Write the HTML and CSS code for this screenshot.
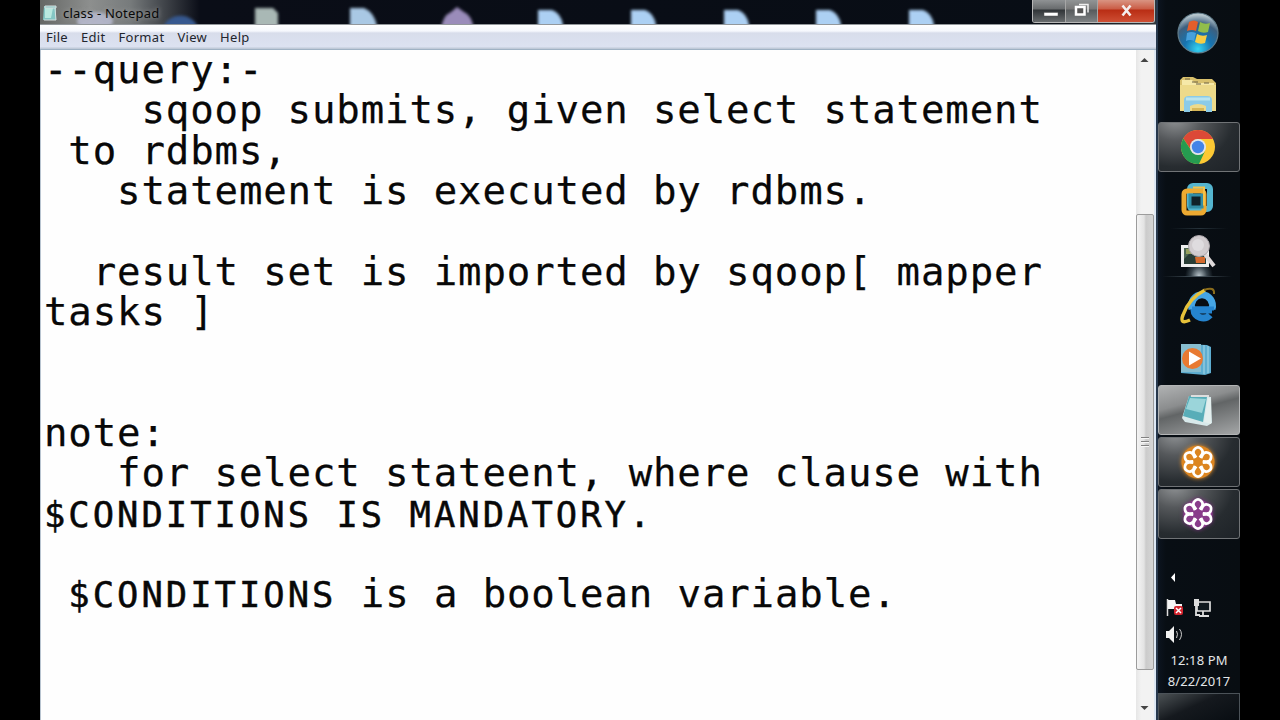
FILE: index.html
```html
<!DOCTYPE html>
<html lang="en">
<head>
<meta charset="utf-8">
<title>class - Notepad</title>
<link rel="stylesheet" href="styles.css">
</head>
<body>
<div class="screen">
  <main class="window">
    <header class="titlebar">
      <svg class="desktop-peek" width="1116" height="24" viewBox="40 0 1116 24">
        <g class="blurred">
          <ellipse cx="95" cy="21" rx="18" ry="9" fill="#c0c3dc" opacity=".75"/>
          <path d="M163 28a18 16 0 0 1 35 0z" fill="#36588f"/>
          <path d="M255 8h18l5 5v18h-23z" fill="#a9b8b5"/>
          <path d="M350 8h14q10 4 13 18v4h-27z" fill="#a9c8e4"/>
          <path d="M441 30q1-14 10-18l6-5 7 5q8 3 10 18z" fill="#9a8cba"/>
          <path id="doc" d="M538 10h14q9 3 11 15v6h-25z" fill="#acd0f3"/>
          <use href="#doc" x="93"/><use href="#doc" x="186"/><use href="#doc" x="278"/><use href="#doc" x="371"/>
        </g>
      </svg>
      <svg class="app-icon" width="16" height="18" viewBox="0 0 16 18"><path d="M2 2h12v14H1z" fill="#84c6c4"/><path d="M3 4h8L9 14H3z" fill="#b9e8df"/><path d="M3 2h11v2H3zM13 4l1 12H2" fill="none" stroke="#d5dede"/></svg>
      <span class="caption">class - Notepad</span>
      <div class="controls">
        <span class="ctl minimize"><svg width="32" height="23"><path d="M11 12.500h14v3.500H11z" fill="#fff" stroke="#555" stroke-width=".5"/></svg></span>
        <span class="ctl restore"><svg width="31" height="23"><path d="M13 4.500h9v8" fill="none" stroke="#eee" stroke-width="1.500"/><path d="M10 7h8.500v7.500H10z" fill="#555" stroke="#fff" stroke-width="2.500"/></svg></span>
        <span class="ctl close"><svg width="56" height="23"><path d="M24.500 5.500l8 10M32.500 5.500l-8 10" stroke="#f4eeee" stroke-width="2.600"/></svg></span>
      </div>
    </header>
    <nav class="menubar"><span>File</span><span>Edit</span><span>Format</span><span>View</span><span>Help</span></nav>
    <div class="editor">
<pre class="document">--query:-
    sqoop submits, given select statement
 to rdbms,
   statement is executed by rdbms.

  result set is imported by sqoop[ mapper
tasks ]


note:
   for select stateent, where clause with
<span class="caps">$CONDITIONS IS MANDATORY.</span>

<span class="caps"> $CONDITIONS</span> is a boolean variable.</pre>
      <div class="scrollbar">
        <svg class="arrow" width="17" height="20"><path d="M4.500 12l4-4 4 4z" fill="#444"/></svg>
        <div class="track"></div>
        <div class="thumb"><i></i><i></i><i></i></div>
        <svg class="arrow bottom" width="17" height="50"><path d="M4.500 36l4 4 4-4z" fill="#444"/></svg>
      </div>
    </div>
  </main>
  <aside class="taskbar">
    <div class="item start">
      <svg width="44" height="44" viewBox="0 0 44 44">
        <defs><radialGradient id="orb" cx=".5" cy=".9" r=".85"><stop offset="0" stop-color="#35d4f2"/><stop offset=".4" stop-color="#1674b1"/><stop offset=".75" stop-color="#3d5f7e"/><stop offset="1" stop-color="#b5c5cd"/></radialGradient></defs>
        <circle cx="22" cy="22" r="20" fill="url(#orb)" stroke="#617d8b" stroke-width="1.200"/>
        <path d="M13 11q5-3 9 0l-2 9q-4-2-9 0z" fill="#e45e2b"/><path d="M24 11q5 3 10 1l-2 9q-5 2-10-1z" fill="#91bd4b"/>
        <path d="M11 22q4-2 9 0l-2 8q-4-2-8 0z" fill="#48a0dc"/><path d="M21 23q5 3 10 1l-2 8q-5 2-10-1z" fill="#f7cd45"/>
      </svg>
    </div>
    <div class="item explorer">
      <svg width="40" height="40" viewBox="0 0 40 40">
        <path d="M2 6l3-3h10l4 2h15l4 4v26H2z" fill="#d9c16d"/><path d="M4 6h10l3 3h19v6H4z" fill="#f6e9a8"/><path d="M7 5h5m2 3h6m-2 2h5m3-1h5" stroke="#6d6345"/>
        <path d="M2 11h36v26H2z" fill="#edda8a"/><path d="M6 26q0-4 5-4h18q5 0 5 4v12h-6v-6q-8-4-16 0v6H6z" fill="#8bcbe8"/><path d="M8 25h24" stroke="#b9e4ef" stroke-width="3"/><path d="M14 34h12v3H14z" fill="#d7b757"/>
      </svg>
    </div>
    <div class="item button">
      <svg width="38" height="38" viewBox="0 0 38 38">
        <circle cx="19" cy="19" r="17" fill="#fcc934"/><path d="M4.300 10.500A17 17 0 0 1 34 11H19a8 8 0 0 0-7.500 10z" fill="#dc4937"/><path d="M4.300 10.500A17 17 0 0 0 20 36l6-13a8 8 0 0 1-14-1z" fill="#269b50"/>
        <circle cx="19" cy="19" r="8" fill="#dfe5ed"/><circle cx="19" cy="19" r="6.200" fill="#4384e8"/>
      </svg>
    </div>
    <div class="item vmware">
      <svg width="40" height="40" viewBox="0 0 40 40" fill="none">
        <rect x="12" y="5" width="20" height="23" rx="3" stroke="#54b5cf" stroke-width="6"/><rect x="6" y="10" width="20" height="22" rx="3" stroke="#edaa31" stroke-width="5"/><path d="M12 14h12v12H12z" fill="#10222a" stroke="#318da6" stroke-width="3"/><path d="M15 6.500h11v18" stroke="#f4c24a" stroke-width="2"/>
      </svg>
    </div>
    <div class="item magnifier">
      <svg width="44" height="40" viewBox="0 0 44 40">
        <path d="M5 13h28v22H5z" fill="#eee"/><path d="M8 16h22v16H8z" fill="#4c6550"/><path d="M8 27l7-7 6 5 9-2v9H8z" fill="#293d35"/><path d="M19 25h10v6H20z" fill="#d46b2e"/><path d="M10 17h6v5h-6z" fill="#96a05d"/>
        <path d="M28 21l10 13" stroke="#ded9da" stroke-width="4"/><circle cx="23" cy="14" r="10.500" fill="#d1cccf" stroke="#aca6ab"/><circle cx="22" cy="13" r="6" fill="#dfdcdf"/>
      </svg>
    </div>
    <div class="item ie">
      <svg width="44" height="44" viewBox="0 0 44 44" fill="none">
        <path d="M36 26H18a9 8 0 0 0 16 5" stroke="#2584cf" stroke-width="7"/><path d="M16 25a10.500 11 0 1 1 20 0" stroke="#45a5e5" stroke-width="7"/><path d="M16 24.500h22" stroke="#2584cf" stroke-width="4"/>
        <path d="M14 36q-11 5-7-5Q13 14 29 6" stroke="#e7c23a" stroke-width="3.500"/><path d="M28 6q11-4 10 4" stroke="#8b6d1c" stroke-width="2"/>
      </svg>
    </div>
    <div class="item wmp">
      <svg width="38" height="36" viewBox="0 0 38 36">
        <path d="M2 2l26 1 4 2v26l-6 2-24-2z" fill="#5dadd0"/><path d="M2 2h20v28H2z" fill="#87bdcf"/><path d="M25 3v29M29 4v27" stroke="#a9d8e6"/>
        <circle cx="13.500" cy="16.500" r="10.500" fill="#e87a32"/><path d="M10 9.500v14l12-7z" fill="#fff"/>
      </svg>
    </div>
    <div class="item button active">
      <svg width="38" height="40" viewBox="0 0 38 40">
        <path d="M10 6l22 1 1 26-5 3-22-4-3-4z" fill="#d8e9eb"/><path d="M10 6l18 1-4 25-20-6z" fill="#58adb8"/><path d="M11 8l16 1-4 14-16-4z" fill="#9bd5da"/><path d="M29 8l3 1v25l-7-2z" fill="#e4efee"/><path d="M12 6h18" stroke="#ddd" stroke-width="2"/>
      </svg>
    </div>
    <div class="item button">
      <svg class="flower orange" width="40" height="40" viewBox="-20 -20 40 40"><circle r="16.500" fill="#dc8520"/><g id="petals" fill="none" stroke="#fff" stroke-width="2.700"><path id="petal" d="M-1.800-4.500l-2-3a4.500 4.500 0 1 1 7.600 0l-2 3"/><use href="#petal" transform="rotate(60)"/><use href="#petal" transform="rotate(120)"/><use href="#petal" transform="rotate(180)"/><use href="#petal" transform="rotate(240)"/><use href="#petal" transform="rotate(300)"/></g></svg>
    </div>
    <div class="item button">
      <svg class="flower purple" width="40" height="40" viewBox="-20 -20 40 40"><circle r="14.500" fill="#893c8b"/><use href="#petals"/></svg>
    </div>
    <div class="tray">
      <svg width="60" height="80" viewBox="0 0 60 80">
        <path d="M17 4v9l-4-4.500z" fill="#fff"/>
        <path d="M9.500 30v17" stroke="#ddd" stroke-width="1.500"/><path d="M10 31h7l1 4h6v8h-6l-1-3h-7z" fill="#f5f5f5"/><rect x="16" y="37" width="9" height="9" rx="2" fill="#d3242e"/><path d="M18 39l5 5m0-5l-5 5" stroke="#fff" stroke-width="1.500"/>
        <path d="M40 33h12v9H39v-7" fill="#10191f" stroke="#ddd" stroke-width="1.700"/><path d="M36 30h5v7h-5z" fill="#ddd"/><path d="M38 37v9h4m3-4v4m-4 1h10" stroke="#ddd" stroke-width="1.800" fill="none"/>
        <path d="M8 62h3l5-5v17l-5-5H8z" fill="#f2f2f2"/><path d="M18.500 62q2 3 0 7m3-9q4 5 0 11" stroke="#ccc" fill="none"/>
      </svg>
    </div>
    <div class="clock"><span>12:18 PM</span><span>8/22/2017</span></div>
    <div class="show-desktop"></div>
  </aside>
</div>
</body>
</html>
```
FILE: styles.css
```css
* { box-sizing: border-box; }
body { margin: 0; background: #000; overflow: hidden; }
.screen { width: 1280px; height: 720px; padding-left: 40px; display: flex; background: #000; }
.window { width: 1118px; height: 720px; display: flex; flex-direction: column; border-right: 2px solid #27384d; }
.titlebar { position: relative; height: 25px; flex: none; display: flex; background: linear-gradient(90deg, #656765 0, #8d8f8e 50px, #777b7c 90px, #474b50 120px, #0a0d17 160px, #080d15 1030px, #30363a 1116px); border-bottom: 1px solid #92979b; }
.desktop-peek { position: absolute; left: 0; top: 0; }
.blurred { filter: blur(1.600px); }
.app-icon { position: relative; margin: 4px 7px 0 2px; }
.caption { position: relative; font: 13px/26px "Noto Sans", sans-serif; color: #080808; width: 110px; margin-left: -2px; text-shadow: 0 0 5px #aaa; white-space: nowrap; letter-spacing: .2px; }
.controls { position: relative; display: flex; height: 23px; margin-left: auto; margin-right: 1px; border: 1px solid #b7b7b7; border-top: 0; border-radius: 0 0 3px 3px; overflow: hidden; }
.ctl { height: 23px; display: flex; background: linear-gradient(#8f9294 0, #686b6d 9px, #303437 10px, #6c7072 23px); border-right: 1px solid #a6a6a6; }
.restore { background: linear-gradient(#919495 0, #777 9px, #565a5c 10px, #808486 23px); }
.close { border: 0; background: linear-gradient(#d99482 0, #ca5c45 9px, #b92d14 10px, #d05136 23px); }
.menubar { height: 25px; flex: none; display: flex; padding-left: 6px; gap: 13px; font: 13px/25px "Noto Sans", sans-serif; letter-spacing: .3px; color: #22252d; background: linear-gradient(#fff 0, #f6f8fd 6px, #d8ddeb 8px, #dce2f1 22px, #c0cad8 23px); border-bottom: 1px solid #9fb2c4; }
.editor { flex: 1; min-height: 0; display: flex; background: #fefefe; border-left: 1px solid #b8c4d0; border-right: 2px solid #dce7f4; }
.document { margin: 0; flex: 1; padding: 0 0 0 3px; font-family: "DejaVu Sans Mono", monospace; font-size: 39px; line-height: 40.350px; letter-spacing: .88px; color: #080808; white-space: pre; -webkit-text-stroke: .25px #080808; }
.caps { font-size: 35.500px; letter-spacing: 3px; line-height: 1; -webkit-text-stroke: .5px #080808; }
.scrollbar { width: 18px; flex: none; display: flex; flex-direction: column; background: linear-gradient(90deg, #e6e6e6, #f2f2f2 5px); }
.arrow { flex: none; display: block; }
.track { height: 144px; flex: none; }
.thumb { height: 456px; flex: none; display: flex; flex-direction: column; align-items: center; justify-content: center; gap: 2px; border: 1px solid #9c9c9c; border-radius: 2px; background: linear-gradient(90deg, #f4f4f4, #e3e3e3 7px, #cbcbcb 9px, #d6d6d6); }
.thumb i { width: 8px; height: 2px; border-top: 1px solid #828282; background: #f7f7f7; }
.taskbar { width: 82px; height: 720px; flex: none; display: flex; flex-direction: column; background: linear-gradient(90deg, #0c141f, #080e14 8px, #080d12); }
.item { flex: none; display: flex; align-items: center; justify-content: center; padding-right: 2px; }
.start { height: 66px; }
.explorer { height: 56px; }
.button { height: 50px; margin-bottom: 2px; border: 1px solid #707376; border-radius: 3px; background: radial-gradient(ellipse at 20% -10%, #929597 0, #55585b 30%, #272c30 65%, #1d2227 100%); }
.button.active { background: linear-gradient(165deg, #b0b2b3 0, #8b8d8e 35%, #626566 48%, #a4a6a7 100%); border-color: #b3b5b6; }
.vmware { height: 54px; }
.magnifier { height: 48px; background: linear-gradient(90deg, transparent 15%, #26323a 50%, transparent 85%) top / 100% 1px no-repeat, radial-gradient(ellipse at 50% 100%, #bac6cc 0, #36424a 14%, transparent 24%); }
.ie { height: 59px; background: linear-gradient(90deg, transparent 5%, #4c5a63 50%, transparent 90%) top / 100% 1px no-repeat; }
.wmp { height: 50px; }
.flower.orange { filter: drop-shadow(0 0 2px #e18b24); }
.flower.purple { filter: drop-shadow(0 0 2px #792d7e); }
.tray { height: 80px; flex: none; margin-top: 28px; }
.clock { height: 44px; flex: none; display: flex; flex-direction: column; align-items: center; padding-top: 1px; font: 13px/21px "Noto Sans", sans-serif; letter-spacing: .1px; color: #e4e7e9; }
.show-desktop { flex: 1; border: 1px solid #4b5258; border-bottom: 0; background: linear-gradient(155deg, #4b5154, #15191e 45%, #080d12); }
```
